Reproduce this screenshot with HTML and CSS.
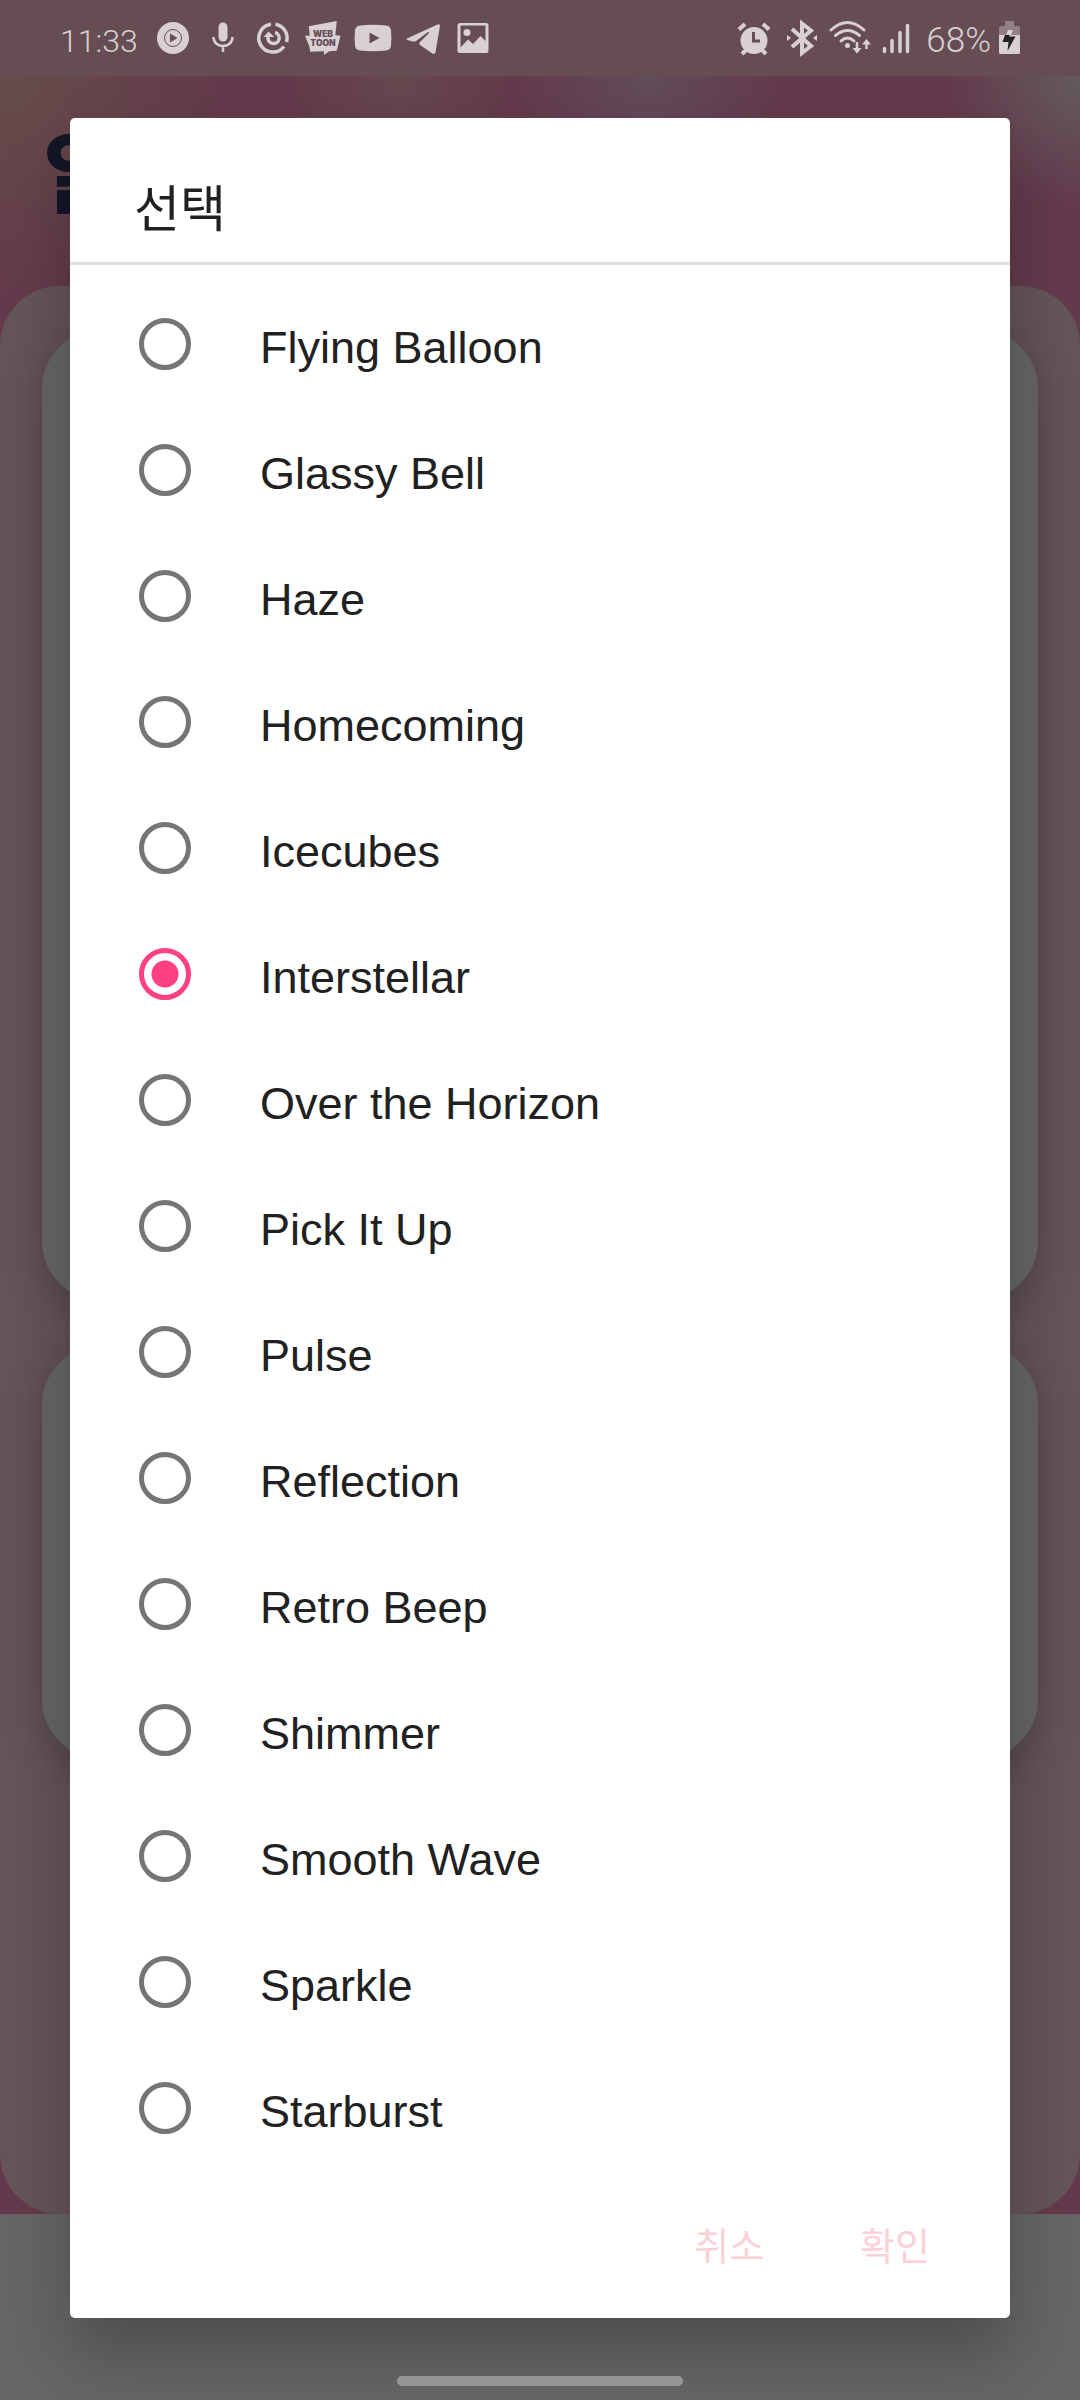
FILE: index.html
```html
<!DOCTYPE html>
<html lang="ko">
<head>
<meta charset="utf-8">
<meta name="viewport" content="width=device-width, initial-scale=1">
<title>선택</title>
<link rel="stylesheet" href="styles.css">
</head>
<body>
<div class="screen">
  <div class="backdrop">
    <header class="status">
      <span class="time">11:33</span>
      <div class="notices">
        <svg class="icon" viewBox="0 0 36 36"><circle cx="18" cy="18" r="16"/><circle class="cut-line" cx="18" cy="18" r="8.5"/><path class="cut" d="M15 13.5v9l7.5-4.500z"/></svg>
        <svg class="icon" viewBox="0 0 36 36"><rect x="13.500" y="2.500" width="9" height="19" rx="4.500"/><path class="line" d="M8.500 17c0 12 19 12 19 0M18 26v6"/></svg>
        <svg class="icon" viewBox="0 0 36 36"><path class="line ring" d="M16 4.200A14 14 0 1 0 29 26.500M20.500 4.200A14 14 0 0 1 31.500 22"/><path class="line ring" d="M13 15v3a5.600 5.600 0 1 0 7-5.500"/><path d="M8.500 17l5-5.500 6 5.500z"/></svg>
        <svg class="icon webtoon" viewBox="0 0 38 36"><path d="M4 5.500L33.500 0l-1.500 15 5.500.5-4 16-8 .5-5.500 4v-4L5.500 32.500 4.500 26.500 0 15.500h5z"/><text x="19" y="17" text-anchor="middle">WEB</text><text x="19" y="26" text-anchor="middle">TOON</text></svg>
        <svg class="icon" viewBox="0 0 36 36"><path d="M5 5.500Q18 4 31 5.500q4.500.5 5 5 .8 7.500 0 15-.5 4.500-5 5-13 1.500-26 0-4.500-.5-5-5-.8-7.500 0-15 .5-4.500 5-5z"/><path class="cut" d="M14.500 12.500v11l10-5.500z"/></svg>
        <svg class="icon" viewBox="0 0 36 36"><path d="M2 18.500L32.500 4.500q2.500-.8 2.500 1.500l-4.500 26q-.8 3-3.500 1.200L15 25q-1.800-1.500 0-3l9-9q.5-1.500-1-1L11 21q-1.500 1-3 .5l-6-1.500q-1.300-.7 0-1.500z"/></svg>
        <svg class="icon" viewBox="0 0 36 36"><path fill-rule="evenodd" d="M5 3h26q2.500 0 2.500 2.500v25q0 2.500-2.500 2.500h-26q-2.500 0-2.500-2.500v-25Q2.500 3 5 3zM5.500 5.500v22l7.500-8 5 4.500 7.500-8 5 5V5.500z"/><circle cx="12" cy="12.500" r="3.500"/></svg>
      </div>
      <div class="system">
        <div class="signals">
          <svg class="icon" viewBox="0 0 36 36"><circle cx="18" cy="20.500" r="13.500"/><path class="line thick" d="M3 9.500l6-5.500M33 9.500L27 4M6 34l5-5M30 34l-5-5"/><path class="cut-line thick" d="M17.500 12v9h6.500"/></svg>
          <svg class="icon" viewBox="0 0 36 36"><path class="line thick" d="M8 9l19 17-9 7V3.500l9 7L8 27"/><path d="M3 15l4 3-4 3zM33 15l-4 3 4 3z"/></svg>
          <svg class="icon" viewBox="0 0 36 36"><path class="line wifi" d="M-1 10Q15.500-5 32 10M3.500 15.500q12-10 24 0M9 21q6.500-6 13 0"/><circle cx="15.500" cy="25.500" r="2.500"/><path class="line" d="M25 22v8M34.500 29v-7"/><path d="M20.500 28h9l-4.500 5.500zM30 24.500h9l-4.500-5.500z"/></svg>
          <svg class="icon" viewBox="0 0 36 36"><path class="line signal" d="M4.500 28.500v3M12 20.500v11M20 12.500v19M27.500 5.500v26"/></svg>
        </div>
        <span class="percent">68%</span>
        <svg class="battery" viewBox="0 0 21 34"><path class="empty" d="M6 0h9v5h4q2 0 2 2v7H0V7q0-2 2-2h4z"/><path d="M0 14h21v17.500q0 1.500-1.500 1.500h-18Q0 33 0 31.500z"/><path d="M9 9h5l-2 5.500H7z"/><path class="bolt" d="M6 14h5l-1 1.500h6.500L8.500 30 9.500 21H3.500z"/></svg>
      </div>
    </header>
    <div class="wallpaper">
      <div class="heading">알</div>
      <div class="panel">
        <div class="card card-large"></div>
        <div class="card card-small"></div>
      </div>
    </div>
    <div class="navigation"><span class="handle"></span></div>
  </div>

  <form class="dialog" role="dialog" aria-labelledby="dialog-title">
    <h1 class="title" id="dialog-title">선택</h1>
    <div class="options">
      <label class="option"><input type="radio" name="tone"><span>Flying Balloon</span></label>
      <label class="option"><input type="radio" name="tone"><span>Glassy Bell</span></label>
      <label class="option"><input type="radio" name="tone"><span>Haze</span></label>
      <label class="option"><input type="radio" name="tone"><span>Homecoming</span></label>
      <label class="option"><input type="radio" name="tone"><span>Icecubes</span></label>
      <label class="option"><input type="radio" name="tone" checked><span>Interstellar</span></label>
      <label class="option"><input type="radio" name="tone"><span>Over the Horizon</span></label>
      <label class="option"><input type="radio" name="tone"><span>Pick It Up</span></label>
      <label class="option"><input type="radio" name="tone"><span>Pulse</span></label>
      <label class="option"><input type="radio" name="tone"><span>Reflection</span></label>
      <label class="option"><input type="radio" name="tone"><span>Retro Beep</span></label>
      <label class="option"><input type="radio" name="tone"><span>Shimmer</span></label>
      <label class="option"><input type="radio" name="tone"><span>Smooth Wave</span></label>
      <label class="option"><input type="radio" name="tone"><span>Sparkle</span></label>
      <label class="option"><input type="radio" name="tone"><span>Starburst</span></label>
    </div>
    <div class="actions">
      <button class="action" type="button">취소</button>
      <button class="action" type="button">확인</button>
    </div>
  </form>
</div>
</body>
</html>
```

FILE: styles.css
```css
* {
  box-sizing: border-box;
}

body {
  margin: 0;
  background: #666;
  font-family: "Liberation Sans", "Noto Sans CJK KR", sans-serif;
}

/* The page behind and the dialog share one grid cell */
.screen {
  display: grid;
  grid-template-columns: minmax(0, 1fr);
  min-height: 100vh;
}

.backdrop,
.dialog {
  grid-area: 1 / 1;
}

.backdrop {
  display: flex;
  flex-direction: column;
}

/* Status bar */
.status {
  display: flex;
  align-items: center;
  height: 76px;
  padding: 0 60px;
  background: #664d54;
  color: #d9d0d3;
}

.time,
.percent {
  padding-top: 6px;
  font: 300 32px/40px Roboto, sans-serif;
}

.time {
  width: 88px;
}

.percent {
  font-size: 35px;
}

.notices,
.signals {
  display: flex;
  align-items: center;
}

.notices {
  gap: 14px;
  padding-left: 7px;
}

.signals {
  gap: 12px;
  margin-right: 2px;
}

.system {
  display: flex;
  align-items: center;
  gap: 8px;
  margin-left: auto;
}

.icon {
  width: 36px;
  height: 36px;
  overflow: visible;
  fill: #d9d0d3;
}

.line {
  fill: none;
  stroke: #d9d0d3;
  stroke-width: 2.5;
}

.thick {
  stroke-width: 4;
}

.ring {
  stroke-width: 3.5;
}

.wifi {
  stroke-width: 3;
  stroke-linecap: round;
}

.signal {
  stroke-width: 3.5;
  stroke-linecap: round;
}

.cut {
  fill: #664d54;
}

.cut-line {
  fill: none;
  stroke: #664d54;
  stroke-width: 1;
}

.cut-line.thick {
  stroke-width: 3;
}

.webtoon text {
  fill: #664d54;
  font: 900 9px Inter, sans-serif;
}

.battery {
  width: 21px;
  height: 34px;
  fill: #d9d0d3;
}

.battery .empty {
  fill: #927f84;
}

.battery .bolt {
  fill: #222;
}

/* Dimmed page */
.wallpaper {
  background:
    radial-gradient(circle at 100% 0, #635a5f 0, transparent 130px),
    radial-gradient(circle at 0 0, #664d4a 0, transparent 220px),
    radial-gradient(circle at 60% 0, #624c59 0, transparent 130px),
    radial-gradient(circle at 37% 0, #66484f 0, transparent 110px),
    #643b4c;
}

.heading {
  height: 210px;
  padding: 42px 44px 0;
  color: #141626;
  font: 900 88px/100px "Noto Sans CJK KR", sans-serif;
}

.panel {
  display: flex;
  flex-direction: column;
  gap: 44px;
  min-height: 1928px;
  padding: 43px 42px;
  border-radius: 60px;
  background: #65555a;
}

.card {
  border-radius: 60px;
  background: #666;
  box-shadow: 0 12px 40px rgba(0, 0, 0, 0.2);
}

.card-large {
  min-height: 972px;
}

.card-small {
  min-height: 414px;
}

.navigation {
  display: flex;
  flex: 1;
  align-items: flex-end;
  justify-content: center;
  padding-bottom: 14px;
  background: #666;
}

.handle {
  z-index: 1;
  width: 286px;
  height: 10px;
  border-radius: 5px;
  background: #969696;
}

/* Dialog */
.dialog {
  margin: 118px 70px 82px;
  border-radius: 5px;
  background: #fff;
  box-shadow: 0 36px 70px rgba(0, 0, 0, 0.25);
  color: #212121;
}

.title {
  height: 147px;
  margin: 0;
  padding: 53px 64px 0;
  border-bottom: 3px solid #e0e0e0;
  font: 400 50px/68px "Noto Sans CJK KR", sans-serif;
}

.options {
  padding-top: 16px;
}

.option {
  display: flex;
  align-items: center;
  gap: 69px;
  height: 126px;
  padding-left: 69px;
  font-size: 45px;
  line-height: 56px;
}

.option span {
  padding-top: 8px;
}

.option input {
  width: 52px;
  height: 52px;
  margin: 0;
  appearance: none;
  border: 5px solid #757575;
  border-radius: 50%;
  background: #fff;
}

.option input:checked {
  border-color: #ff4081;
  background: radial-gradient(circle, #ff4081 13px, #fff 14px);
}

.actions {
  display: flex;
  justify-content: flex-end;
  gap: 64px;
  height: 147px;
  padding: 41px 64px 0 0;
}

.action {
  height: 64px;
  padding: 0 16px;
  border: 0;
  background: none;
  color: #fbd0d6;
  font: 400 38px/64px "Noto Sans CJK KR", sans-serif;
}
```
